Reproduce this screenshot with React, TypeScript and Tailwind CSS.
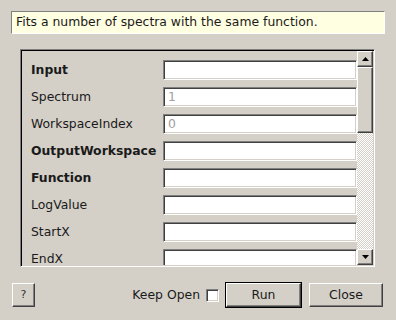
import React from 'react';

const rows: { label: string; bold?: boolean; value?: string }[] = [
  { label: 'Input', bold: true },
  { label: 'Spectrum', value: '1' },
  { label: 'WorkspaceIndex', value: '0' },
  { label: 'OutputWorkspace', bold: true },
  { label: 'Function', bold: true },
  { label: 'LogValue' },
  { label: 'StartX' },
  { label: 'EndX' },
];

const raised =
  'border border-t-white border-l-white border-r-[#404040] border-b-[#404040] shadow-[inset_-1px_-1px_0_#808080] bg-[#d4d0c8]';
const sunken =
  'border border-t-[#808080] border-l-[#808080] border-r-white border-b-white shadow-[inset_1px_1px_0_#404040,inset_-1px_-1px_0_#d4d0c8]';

function Arrow({ up }: { up?: boolean }) {
  return (
    <svg width="7" height="4" viewBox="0 0 7 4">
      <path d={up ? 'M3.5 0 L7 4 L0 4 Z' : 'M0 0 L7 0 L3.5 4 Z'} fill="#000" />
    </svg>
  );
}

export default function App() {
  return (
    <div
      className="w-[396px] h-[320px] bg-[#d4d0c8] text-[12.4px] text-[#1a1a1a] flex flex-col"
      style={{ fontFamily: '"DejaVu Sans", Verdana, sans-serif' }}
    >
      {/* description */}
      <div className="mt-[11px] ml-[11px] w-[374px] h-[23px] bg-[#ffffe1] border border-t-[#808080] border-l-[#808080] border-r-white border-b-white flex items-center pl-[4px]">
        Fits a number of spectra with the same function.
      </div>

      {/* property scroll area */}
      <div className="mt-[15px] ml-[20px] w-[355px] h-[218px] border border-t-[#808080] border-l-[#808080] border-r-white border-b-white shadow-[inset_1px_1px_0_#000] flex p-[1px]">
        <div className="flex-1 overflow-hidden pt-[9px] pl-[9px] flex flex-col gap-[7px]">
          {rows.map((r) => (
            <div key={r.label} className="flex items-center h-[20px] shrink-0">
              <div className={`w-[132px] pt-[1px] ${r.bold ? 'font-bold' : ''}`}>{r.label}</div>
              <div className={`flex-1 h-[20px] bg-white ${sunken} flex items-center pl-[4px] text-[#a0a0a0]`}>
                {r.value}
              </div>
            </div>
          ))}
        </div>
        <div className="w-[16px] flex flex-col">
          <div className={`h-[16px] ${raised} flex items-center justify-center`}>
            <Arrow up />
          </div>
          <div className={`h-[66px] ${raised}`} />
          <div className="flex-1 bg-[repeating-conic-gradient(#d4d0c8_0%_25%,#ffffff_0%_50%)] bg-[length:2px_2px]" />
          <div className={`h-[16px] ${raised} flex items-center justify-center`}>
            <Arrow />
          </div>
        </div>
      </div>

      {/* buttons */}
      <div className="mt-[15px] flex items-center pl-[12px] pr-[13px]">
        <div className={`w-[23px] h-[24px] ${raised} flex items-center justify-center text-[11px] text-[#333]`}>?</div>
        <div className="ml-auto flex items-center">
          <span>Keep Open</span>
          <div className={`ml-[6px] w-[13px] h-[13px] bg-white ${sunken}`} />
          <div className="ml-[6px] w-[77px] h-[26px] border border-black">
            <div className={`w-full h-full ${raised} flex items-center justify-center`}>Run</div>
          </div>
          <div className={`ml-[7px] w-[74px] h-[24px] ${raised} flex items-center justify-center`}>Close</div>
        </div>
      </div>
    </div>
  );
}
